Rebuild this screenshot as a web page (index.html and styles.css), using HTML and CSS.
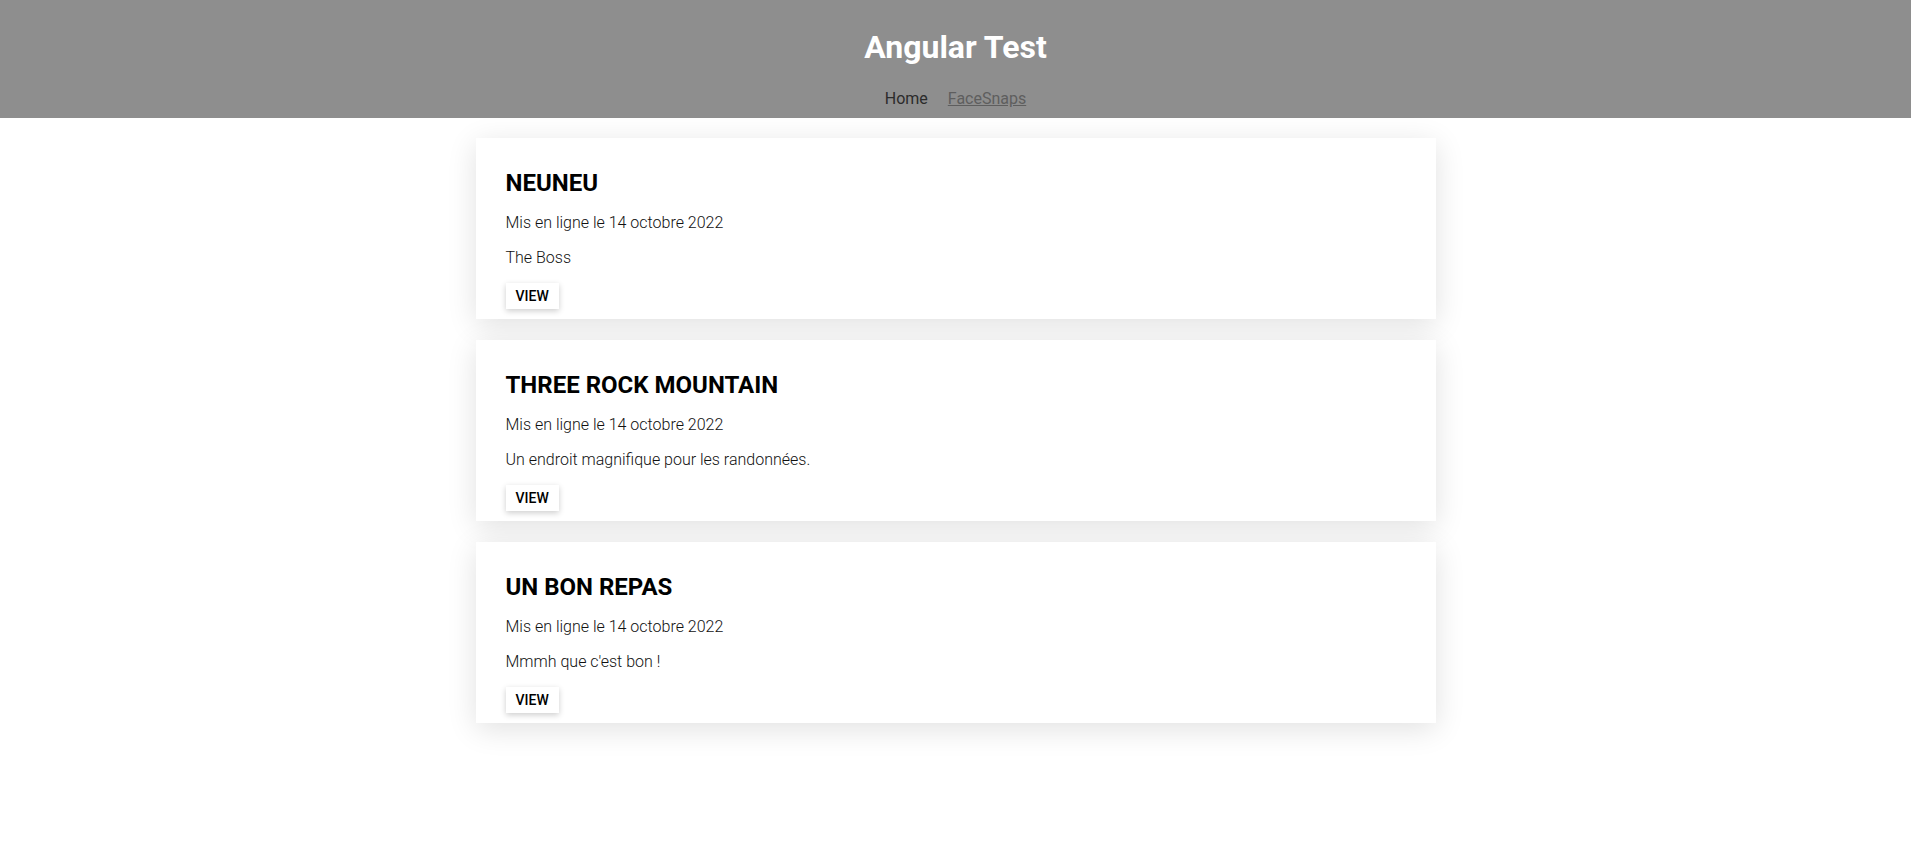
FILE: index.html
```html
<!DOCTYPE html>
<html lang="fr">
<head>
<meta charset="utf-8">
<title>Angular Test</title>
<link rel="stylesheet" href="styles.css">
</head>
<body>
<header class="header">
  <h1 class="header-title">Angular Test</h1>
  <nav class="nav">
    <a class="nav-link nav-link-active" href="#">Home</a>
    <a class="nav-link" href="#">FaceSnaps</a>
  </nav>
</header>
<main class="list">
  <article class="card">
    <h2 class="card-title">NEUNEU</h2>
    <p class="card-text">Mis en ligne le 14 octobre 2022</p>
    <p class="card-text">The Boss</p>
    <button class="btn">VIEW</button>
  </article>
  <article class="card">
    <h2 class="card-title">THREE ROCK MOUNTAIN</h2>
    <p class="card-text">Mis en ligne le 14 octobre 2022</p>
    <p class="card-text">Un endroit magnifique pour les randonnées.</p>
    <button class="btn">VIEW</button>
  </article>
  <article class="card">
    <h2 class="card-title">UN BON REPAS</h2>
    <p class="card-text">Mis en ligne le 14 octobre 2022</p>
    <p class="card-text">Mmmh que c'est bon !</p>
    <button class="btn">VIEW</button>
  </article>
</main>
</body>
</html>
```

FILE: styles.css
```css
* { box-sizing: border-box; }
html, body {
  margin: 0;
  padding: 0;
  background: #ffffff;
  font-family: Roboto, "Liberation Sans", sans-serif;
}
body {
  min-height: 868px;
}
.header {
  background: #8e8e8e;
  display: flex;
  flex-direction: column;
  align-items: center;
  padding: 26px 0 10px;
}
.header-title {
  margin: 0;
  font-size: 32px;
  font-weight: 700;
  color: #ffffff;
  line-height: 42px;
}
.nav {
  display: flex;
  gap: 20px;
  margin-top: 21px;
  font-size: 16px;
}
.nav-link {
  color: #5e5e5e;
  text-decoration: underline;
  font-weight: 400;
}
.nav-link-active {
  color: #2b2b2b;
  text-decoration: none;
}
.list {
  width: 960px;
  margin: 20px auto 0;
  padding-bottom: 60px;
  display: flex;
  flex-direction: column;
  gap: 21px;
}
.card {
  background: #ffffff;
  box-shadow: 0 6px 28px rgba(0, 0, 0, 0.12);
  padding: 31px 30px 10px;
  display: flex;
  flex-direction: column;
  align-items: flex-start;
}
.card-title {
  margin: 0 0 16px;
  font-size: 24px;
  font-weight: 700;
  color: #000000;
}
.card-text {
  margin: 0 0 16px;
  font-size: 16px;
  font-weight: 300;
  color: #111111;
}
.btn {
  font-family: Roboto, "Liberation Sans", sans-serif;
  font-size: 14px;
  font-weight: 500;
  color: #000000;
  background: #ffffff;
  border: none;
  padding: 5px 10px;
  height: 26px;
  box-shadow: 0 2px 6px rgba(0, 0, 0, 0.2);
}
```
